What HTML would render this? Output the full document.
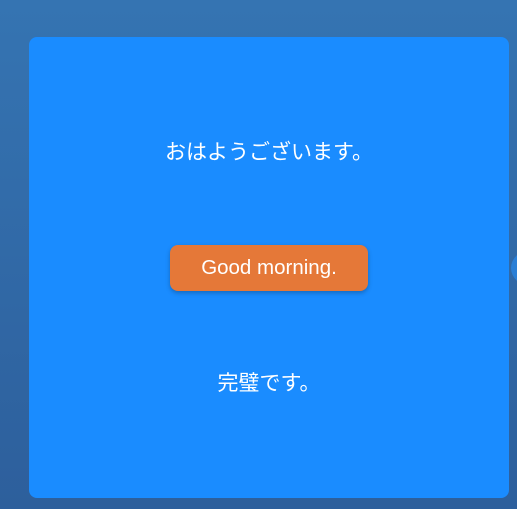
<!DOCTYPE html>
<html><head><meta charset="utf-8"><style>
html,body{margin:0;padding:0}
body{width:517px;height:509px;overflow:hidden;position:relative;background:linear-gradient(#3574b2,#2d5f9c);font-family:"Liberation Sans","Noto Sans CJK JP",sans-serif}
.card{position:absolute;left:29px;top:37px;width:480px;height:461px;background:#1a8cff;border-radius:8px}
.t{position:absolute;left:0;width:100%;text-align:center;color:#fff;font-size:21px}
.btn{position:absolute;left:141px;top:208px;width:198px;height:46px;background:#e57838;border-radius:8px;box-shadow:0 2px 5px rgba(0,0,0,.25);color:#fff;font-size:20.5px;text-align:center;line-height:46px}
.circ{position:absolute;left:511px;top:250px;width:40px;height:36px;border-radius:50%;background:#2a7fd6}
</style></head><body>
<div class="circ"></div>
<div class="card">
<div class="t" style="top:99px">おはようございます。</div>
<div class="btn">Good morning.</div>
<div class="t" style="top:330px">完璧です。</div>
</div>
</body></html>
